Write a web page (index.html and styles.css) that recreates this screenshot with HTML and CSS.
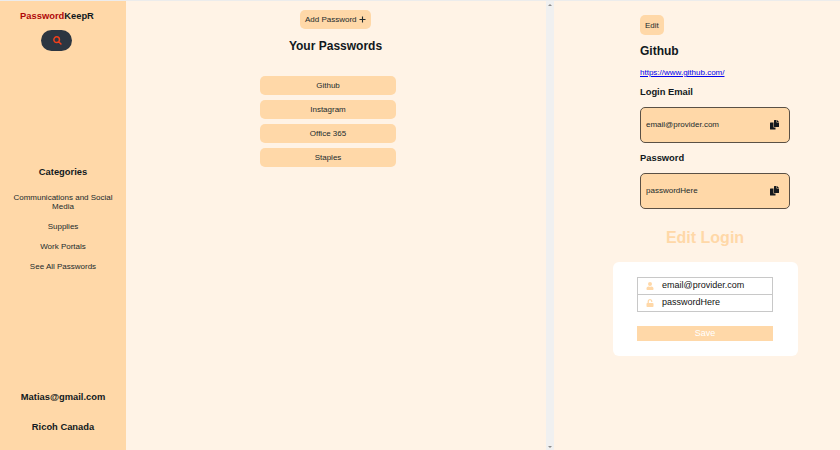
FILE: index.html
```html
<!DOCTYPE html>
<html lang="en">
<head>
<meta charset="utf-8">
<title>PasswordKeepR</title>
<link rel="stylesheet" href="styles.css">
</head>
<body>
<div class="app">
  <aside class="sidebar">
    <h3 class="brand"><span>Password</span>KeepR</h3>
    <button class="search" aria-label="Search"><svg viewBox="0 0 16 16"><path d="M10.5 10.5L15 15M11.5 6.5a5 5 0 1 1-10 0 5 5 0 0 1 10 0z"/></svg></button>
    <nav class="categories">
      <h3>Categories</h3>
      <a>Communications and Social Media</a>
      <a>Supplies</a>
      <a>Work Portals</a>
      <a>See All Passwords</a>
    </nav>
    <footer class="account">
      <h3>Matias@gmail.com</h3>
      <h3>Ricoh Canada</h3>
    </footer>
  </aside>
  <main class="list">
    <button class="btn add">Add Password <svg viewBox="0 0 14 14"><path d="M7 1v12M1 7h12"/></svg></button>
    <h2>Your Passwords</h2>
    <ul>
      <li>Github</li>
      <li>Instagram</li>
      <li>Office 365</li>
      <li>Staples</li>
    </ul>
  </main>
  <div class="scrollbar"><i class="up"></i><i class="down"></i></div>
  <section class="detail">
    <div class="info">
      <button class="btn edit">Edit</button>
      <h2>Github</h2>
      <a class="link" href="#">https://www.github.com/</a>
      <h3>Login Email</h3>
      <div class="value">email@provider.com
        <svg class="copy" viewBox="0 0 18 20"><path d="M1 5h6v10h4v4H1q-1 0-1-1V6q0-1 1-1z"/><path d="M9 0h4v5h5v8q0 1-1 1H9q-1 0-1-1V1q0-1 1-1z"/><path d="M14 0l4 4h-4z"/></svg>
      </div>
      <h3>Password</h3>
      <div class="value">passwordHere
        <svg class="copy" viewBox="0 0 18 20"><path d="M1 5h6v10h4v4H1q-1 0-1-1V6q0-1 1-1z"/><path d="M9 0h4v5h5v8q0 1-1 1H9q-1 0-1-1V1q0-1 1-1z"/><path d="M14 0l4 4h-4z"/></svg>
      </div>
    </div>
    <h1>Edit Login</h1>
    <form class="card">
      <div class="field"><svg viewBox="0 0 448 512"><path d="M224 256a128 128 0 1 0 0-256 128 128 0 0 0 0 256zm90 32h-17a174 174 0 0 1-146 0h-17C60 288 0 348 0 422v42c0 27 21 48 48 48h352c27 0 48-21 48-48v-42c0-74-60-134-134-134z"/></svg>email@provider.com</div>
      <div class="field"><svg viewBox="0 0 448 512"><path d="M400 256H152V153c0-40 32-73 71-73s73 32 73 72v16c0 13 11 24 24 24h32c13 0 24-11 24-24v-16C376 68 307 0 223 0S72 70 72 154v102H48c-27 0-48 21-48 48v160c0 27 21 48 48 48h352c27 0 48-21 48-48V304c0-27-21-48-48-48z"/></svg>passwordHere</div>
      <button class="save" type="button">Save</button>
    </form>
  </section>
</div>
</body>
</html>
```
FILE: styles.css
```css
* { box-sizing: border-box; }
body {
  margin: 0;
  font: 8px/9px "Liberation Sans", Arial, sans-serif;
  color: #222b2d;
  background: #fff3e6;
}
h1, h2, h3, ul { margin: 0; padding: 0; }
h1 { font-size: 16px; line-height: 18px; }
h2 { font-size: 12px; line-height: 14px; color: #111820; }
h3 { font-size: 9.36px; line-height: 11px; color: #111820; }
button { border: 0; font: inherit; color: inherit; }
svg { fill: currentColor; }

.app {
  display: grid;
  grid-template-columns: 126px 420px 8px 286px;
  height: 450px;
  border-top: 1px solid #ececec;
}

.sidebar {
  display: flex;
  flex-direction: column;
  align-items: center;
  padding: 10px 12px 17px;
  background: #ffd8a8;
}
.brand { margin-right: 12px; }
.brand span { color: #b00808; }
.search {
  display: flex;
  align-items: center;
  justify-content: center;
  width: 31px;
  height: 21px;
  margin: 8px 13px 0 0;
  padding: 0 0 0 2px;
  border-radius: 10.5px;
  background: #2c3641;
  color: #f0401c;
}
.search svg {
  width: 9px;
  height: 9px;
  fill: none;
  stroke: currentColor;
  stroke-width: 2.6;
}
.categories {
  display: flex;
  flex-direction: column;
  gap: 11px;
  width: 102px;
  margin-top: 116px;
  text-align: center;
}
.categories h3 { margin-bottom: 4px; }
.account {
  display: flex;
  flex-direction: column;
  gap: 19px;
  margin-top: auto;
  text-align: center;
}

.btn {
  height: 19px;
  padding: 0 5px;
  border-radius: 5px;
  background: #ffd8a8;
}
.list {
  display: flex;
  flex-direction: column;
  align-items: center;
  padding-top: 9px;
}
.add { display: flex; align-items: center; gap: 2.5px; margin-right: 1px; }
.add svg { width: 7px; height: 7px; stroke: currentColor; stroke-width: 2.2; }
.list h2 { margin: 10px 1px 23px 0; }
.list ul {
  display: flex;
  flex-direction: column;
  gap: 5px;
  width: 136px;
  margin-right: 16px;
  list-style: none;
}
.list li {
  height: 19px;
  border-radius: 5px;
  background: #ffd8a8;
  line-height: 19px;
  text-align: center;
}

.scrollbar {
  display: flex;
  flex-direction: column;
  align-items: center;
  justify-content: space-between;
  padding: 3px 0 2px;
  background: #f0f0f0;
}
.scrollbar i { border: 2px solid transparent; }
.scrollbar .up { border-top: 0; border-bottom-color: #8c8c8c; }
.scrollbar .down { border-bottom: 0; border-top-color: #8c8c8c; }

.detail {
  display: flex;
  flex-direction: column;
  align-items: center;
  padding: 14px 0 0 16px;
}
.info { width: 150px; margin-left: 20px; }
.edit { display: block; height: 20px; }
.info h2 { margin: 9px 0 10px; }
.link { display: block; color: #0000ee; }
.info h3 { margin: 10px 0 9px; }
.value {
  display: flex;
  align-items: center;
  justify-content: space-between;
  height: 36px;
  padding: 0 10px 1px 5px;
  border: 1px solid #5a5045;
  border-radius: 5px;
  background: #ffd8a8;
}
.copy { width: 9px; height: 10px; color: #15191d; }
.detail h1 { margin: 20px 0 15px; color: #ffd8a8; }
.card {
  width: 185px;
  height: 94px;
  padding: 15px 24.5px;
  border-radius: 6px;
  background: #fff;
}
.field {
  display: flex;
  align-items: center;
  gap: 8px;
  height: 18px;
  padding: 0 0 1px 8px;
  border: 1px solid #c8c8c8;
  color: #111;
  font-size: 9px;
}
.field + .field { margin-top: -1px; }
.field svg { width: 8px; height: 8px; color: #ffd8a8; }
.save {
  display: block;
  width: 100%;
  height: 15px;
  margin-top: 14px;
  padding: 0;
  background: #ffd8a8;
  color: #fff;
  font-size: 9px;
}
```
